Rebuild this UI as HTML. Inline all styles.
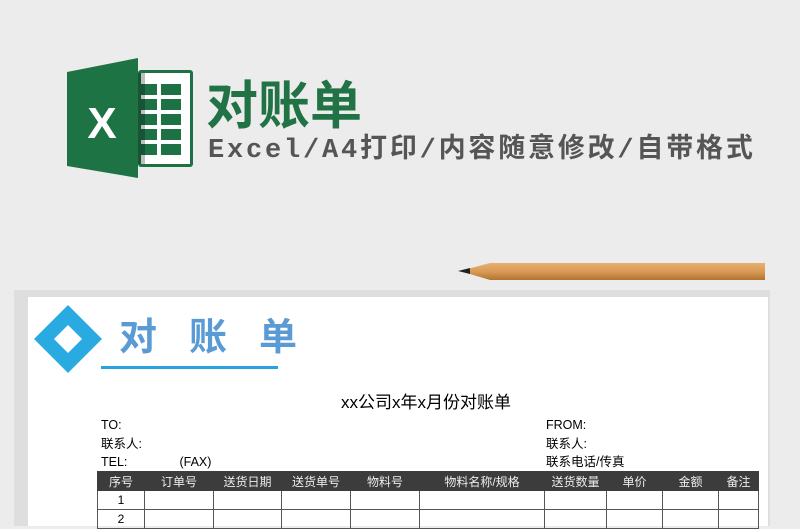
<!DOCTYPE html>
<html><head><meta charset="utf-8"><style>
body{margin:0;width:800px;height:526px;overflow:hidden;background:#ececec;position:relative;font-family:"Liberation Sans","Noto Sans CJK SC",sans-serif}
.a{position:absolute;white-space:nowrap}
table{border-collapse:collapse;position:absolute;left:97px;top:471px;table-layout:fixed}
td{border:1px solid #555;height:18px;padding:0;text-align:center;font-size:12px;color:#000}
tr.h td{background:#3c3c3c;color:#eee;border-color:#3c3c3c}
</style></head><body>
<svg class="a" style="left:0;top:0" width="800" height="526">
<defs><linearGradient id="p" x1="0" y1="0" x2="0" y2="1"><stop offset="0" stop-color="#e8b070"/><stop offset=".5" stop-color="#d99a55"/><stop offset="1" stop-color="#b27530"/></linearGradient></defs>
<rect x="138" y="70" width="55" height="97" rx="3" fill="#1e7145"/>
<rect x="141" y="73" width="49" height="91" fill="#fff"/>
<g fill="#1e7145">
<rect x="141" y="84" width="16" height="11"/><rect x="161" y="84" width="20" height="11"/>
<rect x="141" y="99" width="16" height="11"/><rect x="161" y="99" width="20" height="11"/>
<rect x="141" y="114" width="16" height="11"/><rect x="161" y="114" width="20" height="11"/>
<rect x="141" y="129" width="16" height="11"/><rect x="161" y="129" width="20" height="11"/>
<rect x="141" y="144" width="16" height="11"/><rect x="161" y="144" width="20" height="11"/>
</g>
<rect x="138" y="73" width="7" height="91" fill="#000" opacity=".25"/>
<polygon points="67,72 138,58 138,178 67,166" fill="#1d7344"/>
<text x="102" y="138" font-size="44" font-weight="bold" fill="#fff" text-anchor="middle" font-family="Liberation Sans">X</text>
<rect x="14" y="290" width="756" height="240" fill="#dedede"/>
<rect x="28" y="297" width="740" height="235" fill="#fff"/>
<polygon points="460,271 490,263 765,263 765,280 490,280" fill="url(#p)"/>
<polygon points="458,271 470,268 470,274" fill="#222"/>
<polygon points="68,305 102,339 68,373 34,339" fill="#29abe2"/>
<polygon points="68,325 82,339 68,353 54,339" fill="#fff"/>
<rect x="101" y="366" width="177" height="3" fill="#29a3e0"/>
</svg>
<div class="a" style="left:206px;top:72px;font-size:52px;font-weight:bold;color:#217346;font-family:'Noto Sans CJK SC',sans-serif;line-height:60px">对账单</div>
<div class="a" style="left:208px;top:134px;font-size:27px;color:#555;letter-spacing:2.8px;font-family:'Liberation Mono','Noto Sans CJK SC',monospace;line-height:34px;font-weight:bold">Excel/A4打印/内容随意修改/自带格式</div>
<div class="a" style="left:119px;top:310px;font-size:38px;font-weight:bold;color:#5b9bd5;letter-spacing:32px;line-height:48px;font-family:'Noto Sans CJK SC',sans-serif">对账单</div>
<div class="a" style="left:341px;top:392px;font-size:17px;line-height:22px">xx公司x年x月份对账单</div>
<div class="a" style="left:101px;top:416px;font-size:12.5px;line-height:18.5px">TO:<br>联系人:<br>TEL:&nbsp;&nbsp;&nbsp;&nbsp;&nbsp;&nbsp;&nbsp;&nbsp;&nbsp;&nbsp;&nbsp;&nbsp;&nbsp;&nbsp;&nbsp;(FAX)</div>
<div class="a" style="left:546px;top:416px;font-size:12.5px;line-height:18.5px">FROM:<br>联系人:<br>联系电话/传真</div>
<table>
<colgroup><col style="width:47px"><col style="width:69px"><col style="width:68px"><col style="width:69px"><col style="width:69px"><col style="width:125px"><col style="width:62px"><col style="width:56px"><col style="width:56px"><col style="width:40px"></colgroup>
<tr class="h"><td>序号</td><td>订单号</td><td>送货日期</td><td>送货单号</td><td>物料号</td><td>物料名称/规格</td><td>送货数量</td><td>单价</td><td>金额</td><td>备注</td></tr>
<tr><td>1</td><td></td><td></td><td></td><td></td><td></td><td></td><td></td><td></td><td></td></tr>
<tr><td>2</td><td></td><td></td><td></td><td></td><td></td><td></td><td></td><td></td><td></td></tr>
</table>
</body></html>
